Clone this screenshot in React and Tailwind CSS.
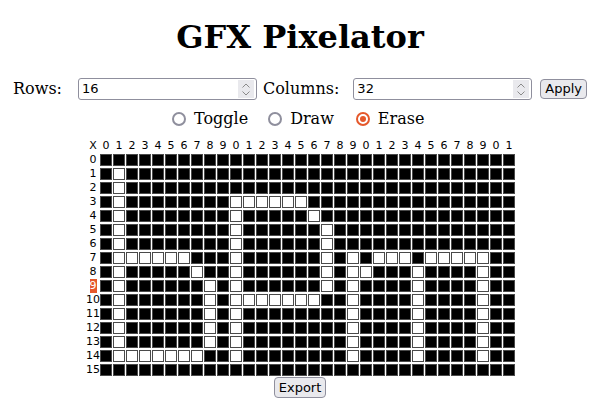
import React from "react";

const ROWS = 16;
const COLS = 32;

// white (erased) cells per row
const WHITE = {
  1: [1],
  2: [1],
  3: [1, 10, 11, 12, 13, 14, 15],
  4: [1, 10, 16],
  5: [1, 10, 17],
  6: [1, 10, 17],
  7: [1, 2, 3, 4, 5, 6, 10, 17, 19, 21, 22, 23, 25, 26, 27, 28, 29],
  8: [1, 7, 10, 17, 19, 20, 24, 29],
  9: [1, 8, 10, 17, 19, 24, 29],
  10: [1, 8, 10, 11, 12, 13, 14, 15, 16, 19, 24, 29],
  11: [1, 8, 10, 19, 24, 29],
  12: [1, 8, 10, 19, 24, 29],
  13: [1, 8, 10, 19, 24, 29],
  14: [1, 2, 3, 4, 5, 6, 7, 10, 19, 24, 29],
};

const ACTIVE_ROW = 9;

function NumberField({ value }) {
  return (
    <div className="flex items-center w-[179px] h-[22px] border border-[#8f8f9d] rounded-[3px] bg-white pl-[3px] pr-[2px]">
      <span className="flex-1 text-left text-[13px] text-black font-['DejaVu_Sans',sans-serif]">{value}</span>
      <div className="w-[16px] h-[18px] bg-[#e9e9ed] flex flex-col items-center justify-center gap-[3px]">
        <svg width="8" height="5" viewBox="0 0 8 5">
          <path d="M0.5 4.5 L4 1 L7.5 4.5" fill="none" stroke="#8a8a8a" strokeWidth="1" />
        </svg>
        <svg width="8" height="5" viewBox="0 0 8 5">
          <path d="M0.5 0.5 L4 4 L7.5 0.5" fill="none" stroke="#8a8a8a" strokeWidth="1" />
        </svg>
      </div>
    </div>
  );
}

function Radio({ label, checked, className = "" }) {
  return (
    <div className={`flex items-center ${className}`}>
      {checked ? (
        <div className="w-[14px] h-[14px] rounded-full border-2 border-[#e5582b] flex items-center justify-center">
          <div className="w-[6px] h-[6px] rounded-full bg-[#e5582b]" />
        </div>
      ) : (
        <div className="w-[14px] h-[14px] rounded-full border-2 border-[#8f8f9d]" />
      )}
      <span className="ml-[8px] text-[16px] text-black">{label}</span>
    </div>
  );
}

function PixelGrid() {
  const cells = [];
  cells.push(
    <div key="x" className="flex items-center justify-center text-[11px] leading-[14px]">X</div>
  );
  for (let c = 0; c < COLS; c++) {
    cells.push(
      <div key={"h" + c} className="w-[12px] text-center text-[11px] leading-[14px]">
        {c % 10}
      </div>
    );
  }
  for (let r = 0; r < ROWS; r++) {
    const whites = WHITE[r] || [];
    cells.push(
      <div key={"r" + r} className="flex items-center justify-center text-[11px] leading-[14px]">
        {r === ACTIVE_ROW ? (
          <span className="bg-[#e5582b] text-white leading-[14px]">{r}</span>
        ) : (
          r
        )}
      </div>
    );
    for (let c = 0; c < COLS; c++) {
      const white = whites.includes(c);
      cells.push(
        <div key={r + "-" + c} className="flex items-center">
          <div
            className={`w-[12px] h-[12px] border border-[#4a4a4a] ${white ? "bg-white" : "bg-black"}`}
          />
        </div>
      );
    }
  }
  return (
    <div className="grid grid-cols-[14px_repeat(32,13px)] auto-rows-[14px] text-black font-['DejaVu_Sans',sans-serif]">
      {cells}
    </div>
  );
}

export default function App() {
  return (
    <div className="w-[600px] bg-white text-black font-['DejaVu_Serif',serif] flex flex-col items-center">
      <h1 className="mt-[18px] text-[32px] leading-[38px] font-bold">GFX Pixelator</h1>

      <div className="mt-[21px] flex items-center self-start pl-[13px] text-[16px]">
        <span>Rows:</span>
        <div className="ml-[16px]">
          <NumberField value="16" />
        </div>
        <span className="ml-[6px]">Columns:</span>
        <div className="ml-[14px]">
          <NumberField value="32" />
        </div>
        <button className="ml-[8px] h-[20px] px-[4px] border border-[#8f8f9d] rounded-[4px] bg-[#e9e9ed] text-[13px] leading-[18px] font-['DejaVu_Sans',sans-serif]">
          Apply
        </button>
      </div>

      <div className="mt-[8px] h-[20px] flex items-center self-start pl-[172px]">
        <Radio label="Toggle" />
        <Radio label="Draw" className="ml-[20px]" />
        <Radio label="Erase" checked className="ml-[22px]" />
      </div>

      <div className="mt-[10px] pl-[2px]">
        <PixelGrid />
      </div>

      <button className="mt-0 h-[21px] px-[4px] border border-[#8f8f9d] rounded-[4px] bg-[#e9e9ed] text-[13px] leading-[19px] font-['DejaVu_Sans',sans-serif]">
        Export
      </button>
    </div>
  );
}
